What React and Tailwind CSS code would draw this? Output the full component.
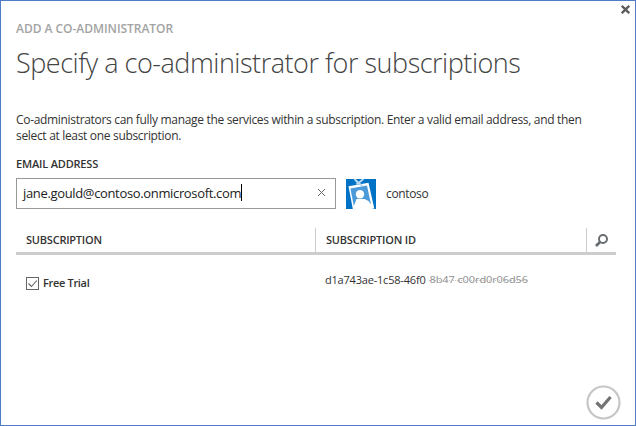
function BadgeIcon() {
  return (
    <svg className="block h-[30px] w-[30px] shrink-0" viewBox="0 0 30 30">
      <rect width="30" height="30" fill="#0072c6" />
      <path d="M2.5 7.2 22.5 3.8 28.3 29.5 25.5 30 22 26 8 30H6.8Z" fill="#fff" />
      <path d="M4.4 9.4 21 6.4 25 25.5 22.5 22 18.5 20H10.5L7.8 27Z" fill="#4c9bd8" />
      <circle cx="14" cy="15.3" r="4.2" fill="#fff" />
      <path d="M8.5 30 10.3 23Q11 20.8 13.5 21.8 16.5 22 18.5 20.5L22.5 23 25.5 30Z" fill="#fff" />
      <path d="M8.5 0 12 3.5M17.5 0 10.5 5.5M10 2 16.5 7" stroke="#b9daf1" strokeWidth="1.9" fill="none" />
    </svg>
  );
}

export default function App() {
  return (
    <main className="flex h-[426px] w-[636px] flex-col border border-[#4f7dc5] bg-white font-['Open_Sans','Noto_Sans',sans-serif] text-[#333] whitespace-nowrap">
      <div className="flex h-[17px] justify-end pt-[4px] pr-[5px]">
        <svg className="h-[9px] w-[9px]" viewBox="0 0 9 9" stroke="#5c5c5c" strokeWidth="2.3">
          <path d="M.8.8 8.2 8.2M8.2.8.8 8.2" />
        </svg>
      </div>
      <header className="pl-[15px]">
        <div className="mt-px h-5 text-[12px] leading-5 font-semibold tracking-[-0.04px] text-[#a3a3a3]">ADD A CO-ADMINISTRATOR</div>
        <h1 className="mt-[4px] h-10 text-[27px] leading-10 font-light tracking-[-0.48px] text-[#444]">Specify a co-administrator for subscriptions</h1>
      </header>
      <p className="mt-[29px] h-8 pl-[15px] text-[12px] leading-4 tracking-[-0.32px]">
        Co-administrators can fully manage the services within a subscription. Enter a valid email address, and then<br />
        select at least one subscription.
      </p>
      <label className="mt-[12px] h-4 pl-[15px] text-[11px] leading-4 font-semibold tracking-[-0.18px]">EMAIL ADDRESS</label>
      <div className="mt-[6px] ml-[15px] flex h-[31px] items-center">
        <div className="flex h-[31px] w-[320px] items-center border border-[#999] pl-1.5">
          <span className="text-[13px] tracking-[-0.345px] text-[#222]">jane.gould@contoso.onmicrosoft.com</span>
          <span className="mb-[2px] h-[17px] w-px bg-black" />
          <svg className="mr-[9px] mb-[2px] ml-auto h-[9px] w-[9px]" viewBox="0 0 9 9" stroke="#666" strokeWidth="1">
            <path d="M1 1 8 8M8 1 1 8" />
          </svg>
        </div>
        <div className="ml-2.5 flex items-center gap-2.5">
          <BadgeIcon />
          <span className="text-[12px] tracking-[-0.35px]">contoso</span>
        </div>
      </div>
      <section className="mt-[19px] ml-[15px] w-[600px]">
        <div className="flex h-[27px] border-b-[3px] border-[#ccc] text-[11px] font-semibold tracking-[-0.22px]">
          <div className="w-[299px] pl-2.5 leading-6">SUBSCRIPTION</div>
          <div className="w-[271px] border-l border-[#ccc] pl-2.5 leading-6 tracking-[-0.2px]">SUBSCRIPTION ID</div>
          <div className="w-[30px] border-l border-[#ccc] pt-[6px] pl-2">
            <svg className="h-[13px] w-[13px]" viewBox="0 0 13 13" fill="none" stroke="#666b70">
              <circle cx="8" cy="5" r="4" strokeWidth="1.9" />
              <path d="M5 8 1 12" strokeWidth="2.6" />
            </svg>
          </div>
        </div>
        <div className="flex h-14 items-start pt-[16px]">
          <div className="flex w-[309px] items-center gap-1 pt-[3px] pl-2.5">
            <span className="flex h-[13px] w-[13px] border border-[#666]">
              <svg className="h-[11px] w-[11px]" viewBox="0 0 11 11" fill="none" stroke="#666" strokeWidth="1.1">
                <path d="m1.5 5.5 3 3L9.8 2.5" />
              </svg>
            </span>
            <span className="text-[11px] leading-[18px] font-semibold tracking-[-0.32px]">Free Trial</span>
          </div>
          <span className="text-[11px] leading-[18px] tracking-[-0.2px]">d1a743ae-1c58-46f0</span>
          <span className="ml-1 inline-block scale-y-75 text-[11px] leading-[18px] tracking-[-0.1px] text-[#8c8c8c] line-through decoration-[#b5b5b5] decoration-dotted">8b47 c00rd0r06d56</span>
        </div>
      </section>
      <footer className="mt-auto flex justify-end pr-[14px] pb-[5px]">
        <svg className="h-[35px] w-[35px]" viewBox="0 0 35 35" fill="none">
          <circle cx="17.5" cy="17.5" r="16" stroke="#c6c6c6" strokeWidth="2.2" />
          <path d="m10.5 17.5 5 5L24.5 12" stroke="#737373" strokeWidth="3.2" />
        </svg>
      </footer>
    </main>
  );
}
